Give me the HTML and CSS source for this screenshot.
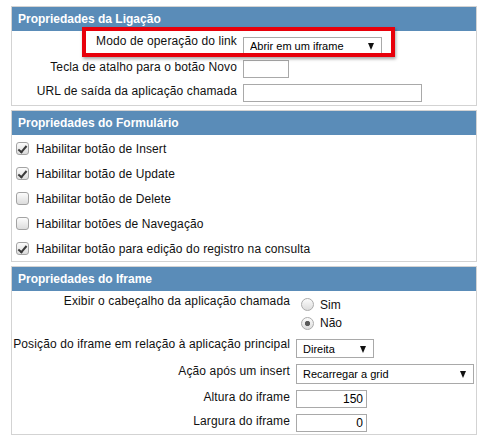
FILE: index.html
```html
<!DOCTYPE html>
<html lang="pt-BR">
<head>
<meta charset="utf-8">
<title>Propriedades</title>
<link rel="stylesheet" href="styles.css">
</head>
<body>
<div class="page">
  <section class="panel">
    <h2 class="panel-title">Propriedades da Ligação</h2>
    <div class="form-grid grid-link">
      <label class="lbl">Modo de operação do link</label>
      <div class="ctl"><span class="sel sel-mode"><select><option>Abrir em um iframe</option></select></span></div>
      <label class="lbl">Tecla de atalho para o botão Novo</label>
      <div class="ctl"><input type="text" class="txt txt-key"></div>
      <label class="lbl">URL de saída da aplicação chamada</label>
      <div class="ctl"><input type="text" class="txt txt-url"></div>
    </div>
    <div class="highlight"></div>
  </section>

  <section class="panel">
    <h2 class="panel-title">Propriedades do Formulário</h2>
    <div class="check-list">
      <label class="check"><input type="checkbox" class="cb" checked> Habilitar botão de Insert</label>
      <label class="check"><input type="checkbox" class="cb" checked> Habilitar botão de Update</label>
      <label class="check"><input type="checkbox" class="cb"> Habilitar botão de Delete</label>
      <label class="check"><input type="checkbox" class="cb"> Habilitar botões de Navegação</label>
      <label class="check"><input type="checkbox" class="cb" checked> Habilitar botão para edição do registro na consulta</label>
    </div>
  </section>

  <section class="panel">
    <h2 class="panel-title">Propriedades do Iframe</h2>
    <div class="form-grid grid-iframe">
      <label class="lbl">Exibir o cabeçalho da aplicação chamada</label>
      <div class="ctl radio-group">
        <label class="radio-opt"><input type="radio" name="hdr" class="rd"> Sim</label>
        <label class="radio-opt"><input type="radio" name="hdr" class="rd" checked> Não</label>
      </div>
      <label class="lbl">Posição do iframe em relação à aplicação principal</label>
      <div class="ctl"><span class="sel sel-pos"><select><option>Direita</option></select></span></div>
      <label class="lbl">Ação após um insert</label>
      <div class="ctl"><span class="sel sel-act"><select><option>Recarregar a grid</option></select></span></div>
      <label class="lbl">Altura do iframe</label>
      <div class="ctl"><input type="text" class="txt txt-num" value="150"></div>
      <label class="lbl">Largura do iframe</label>
      <div class="ctl"><input type="text" class="txt txt-num" value="0"></div>
    </div>
  </section>
</div>
</body>
</html>
```

FILE: styles.css
```css
* {
  box-sizing: border-box;
}

body {
  margin: 0;
  background: #fff;
  font-family: "Liberation Sans", Arial, sans-serif;
  font-size: 12px;
  color: #111;
}

.page {
  padding: 6px 0 0 11px;
  width: 477px;
}

.panel {
  position: relative;
  width: 466px;
  border: 1px solid #d3d3d3;
  background: #fff;
  margin-bottom: 4px;
}

.panel-title {
  margin: 0;
  height: 24px;
  line-height: 24px;
  padding-left: 6px;
  background: #5a8cb8;
  color: #fff;
  font-size: 12px;
  font-weight: bold;
}

.form-grid {
  display: grid;
  column-gap: 6px;
  row-gap: 6px;
  align-items: start;
}

.grid-link {
  grid-template-columns: 225px auto;
  padding: 3px 0 3px;
}

.grid-iframe {
  grid-template-columns: 278px auto;
  padding: 3px 0 2px;
}

.lbl {
  text-align: right;
  line-height: 14px;
  letter-spacing: 0.12px;
  white-space: nowrap;
}

.ctl {
  display: flex;
  align-items: flex-start;
}

/* selects */
.sel {
  position: relative;
  display: block;
}

.sel select {
  display: block;
  width: 100%;
  height: 100%;
  margin: 0;
  padding: 0 0 0 6px;
  -webkit-appearance: none;
  appearance: none;
  border: 1px solid #a9a9a9;
  border-radius: 0;
  background: #fff;
  font-family: "Liberation Sans", Arial, sans-serif;
  font-size: 11px;
  color: #000;
}

.sel::after {
  content: "";
  position: absolute;
  right: 8px;
  top: 50%;
  margin-top: -3px;
  border-left: 3.5px solid transparent;
  border-right: 3.5px solid transparent;
  border-top: 7px solid #111;
  pointer-events: none;
}

.sel-mode {
  width: 139px;
  height: 17px;
  margin-top: 3px;
}

.sel-pos {
  width: 78px;
  height: 19px;
  margin-top: 2px;
}

.sel-act {
  width: 178px;
  height: 20px;
}

/* text inputs */
.txt {
  display: block;
  margin: 0;
  height: 18px;
  border: 1px solid #a9a9a9;
  border-radius: 0;
  background: #fff;
  padding: 0 3px;
  font-family: "Liberation Sans", Arial, sans-serif;
  font-size: 12px;
  color: #000;
}

.txt-key {
  width: 46px;
}

.txt-url {
  width: 179px;
}

.txt-num {
  width: 71px;
  text-align: right;
}

/* checkboxes */
.check-list {
  display: grid;
  grid-auto-rows: 25px;
  padding-top: 1px;
}

.check {
  display: flex;
  align-items: center;
  gap: 7px;
  padding-left: 4px;
  letter-spacing: 0.12px;
}

.cb {
  -webkit-appearance: none;
  appearance: none;
  position: relative;
  flex: none;
  width: 13px;
  height: 13px;
  margin: 0;
  border: 1px solid #a3a3a3;
  border-radius: 3px;
  background: linear-gradient(#fcfcfc, #dcdcdc);
}

.cb:checked::after {
  content: "";
  position: absolute;
  left: 3px;
  top: 1px;
  width: 3px;
  height: 7px;
  border: solid #3a3a3a;
  border-width: 0 2px 2px 0;
  transform: rotate(40deg);
}

/* radios */
.radio-group {
  flex-direction: column;
}

.radio-opt {
  display: flex;
  align-items: center;
  gap: 6px;
  height: 19px;
  padding-left: 5px;
  padding-top: 2px;
}

.radio-opt:last-child {
  height: 18px;
}

.rd {
  -webkit-appearance: none;
  appearance: none;
  flex: none;
  width: 13px;
  height: 13px;
  margin: 0;
  border: 1px solid #ababab;
  border-radius: 50%;
  background: linear-gradient(#fbfbfb, #dcdcdc);
}

.rd:checked {
  background: radial-gradient(circle, #5a5a5a 0, #5a5a5a 2.2px, transparent 3px), linear-gradient(#fbfbfb, #dcdcdc);
}

/* annotation */
.highlight {
  position: absolute;
  left: 70px;
  top: 20px;
  width: 313px;
  height: 30px;
  border: 4px solid #e8000b;
  box-shadow: 1px 2px 3px rgba(0, 0, 0, 0.35);
  pointer-events: none;
}
```
